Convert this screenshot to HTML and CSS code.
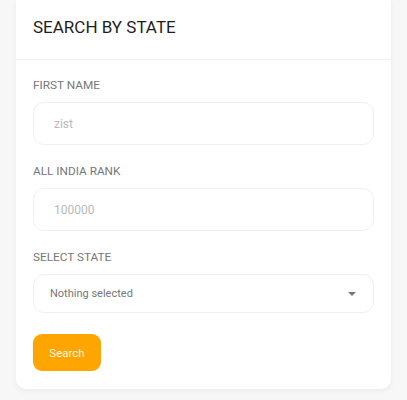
FILE: index.html
```html
<!DOCTYPE html>
<html>
<head>
<meta charset="utf-8">
<link rel="stylesheet" href="styles.css">
</head>
<body>
<div class="card">
  <div class="card-header">SEARCH BY STATE</div>
  <div class="card-body">
    <div class="field">
      <label class="label">FIRST NAME</label>
      <div class="input"><span class="placeholder">zist</span></div>
    </div>
    <div class="field">
      <label class="label">ALL INDIA RANK</label>
      <div class="input"><span class="placeholder">100000</span></div>
    </div>
    <div class="field">
      <label class="label">SELECT STATE</label>
      <div class="select"><span class="select-text">Nothing selected</span><span class="caret"></span></div>
    </div>
    <button class="btn">Search</button>
  </div>
</div>
</body>
</html>
```
FILE: styles.css
```css
html, body { margin: 0; padding: 0; }
body {
  background: #f7f7f7;
  font-family: Roboto, "Liberation Sans", sans-serif;
  padding: 0 16px;
  height: 400px;
  overflow: hidden;
}
.card {
  background: #fff;
  border-radius: 0 0 10px 10px;
  box-shadow: 0 2px 6px rgba(0,0,0,0.05);
  width: 375px;
}
.card-header {
  height: 60px;
  box-sizing: border-box;
  padding: 16px 17px 0;
  font-size: 17px;
  line-height: 22px;
  color: #1e1e1e;
  border-bottom: 1px solid #f0f0f0;
}
.card-body {
  padding: 18px 17px 18px;
}
.field {
  margin-bottom: 19px;
}
.label {
  display: block;
  font-size: 11.8px;
  line-height: 14px;
  color: #777;
  margin-bottom: 10px;
}
.input {
  height: 43px;
  box-sizing: border-box;
  border: 1px solid #f0f0f0;
  border-radius: 11px;
  padding-left: 20px;
  display: flex;
  align-items: center;
}
.placeholder {
  font-size: 12px;
  color: #b8b8b8;
}
.select {
  height: 39px;
  box-sizing: border-box;
  border: 1px solid #f0f0f0;
  border-radius: 11px;
  padding: 0 17px 0 16px;
  display: flex;
  align-items: center;
  justify-content: space-between;
}
.select-text {
  font-size: 11px;
  color: #777;
}
.caret {
  width: 0;
  height: 0;
  border-left: 4px solid transparent;
  border-right: 4px solid transparent;
  border-top: 4px solid #777;
}
.field:nth-child(3) { margin-bottom: 21px; }
.btn {
  display: block;
  height: 37px;
  width: 68px;
  border: none;
  border-radius: 9px;
  background: #ffa500;
  color: #fff8e6;
  font-family: Roboto, "Liberation Sans", sans-serif;
  font-size: 11.5px;
  padding: 0;
}
```
